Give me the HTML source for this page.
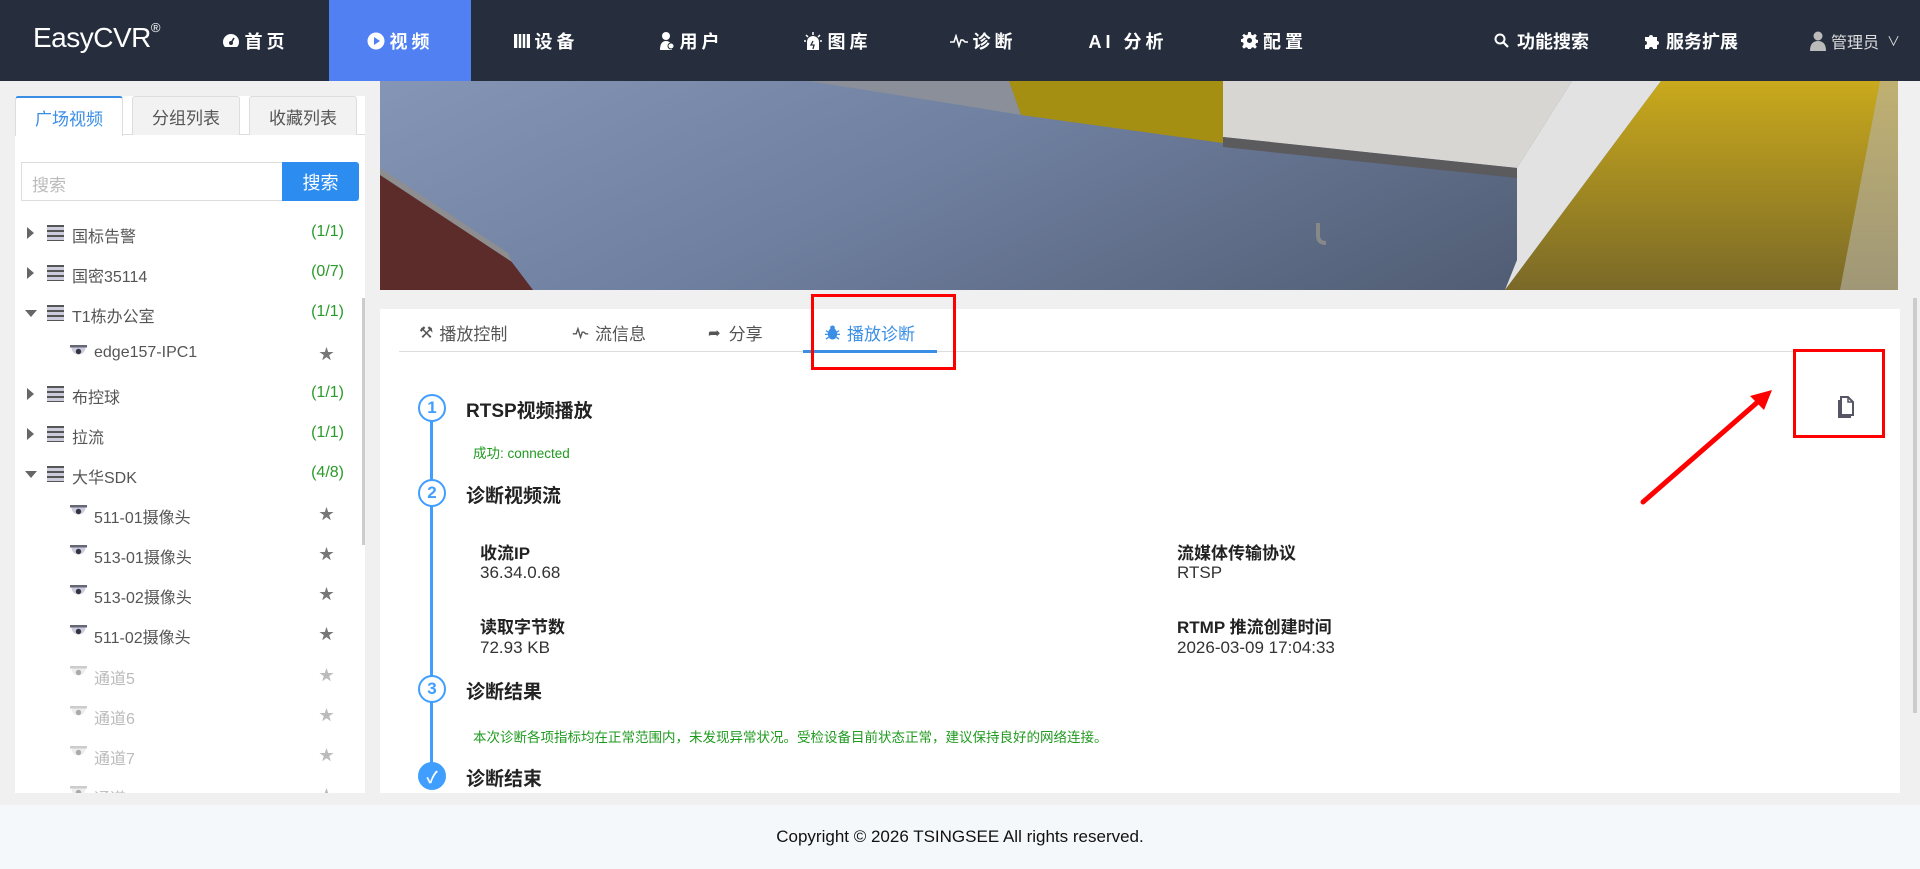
<!DOCTYPE html>
<html><head><meta charset="utf-8">
<style>
*{margin:0;padding:0;box-sizing:border-box}
body{width:1920px;height:869px;position:relative;overflow:hidden;background:#f0f0f0;font-family:"Liberation Sans","Noto Sans CJK SC",sans-serif;color:#333}
.abs{position:absolute}
#hdr{left:0;top:0;width:1920px;height:81px;background:#262e3e}
.logo{left:33px;top:22px;color:#fff;font-size:28px;letter-spacing:-0.5px}
.logo sup{font-size:13px;vertical-align:top;position:relative;top:-2px}
.nav{top:0;height:81px;width:142px;color:#fff;font-weight:bold;font-size:18px;letter-spacing:4px;display:flex;align-items:center;justify-content:center}
.nav.on{background:#5080f2}
.nav svg{margin-right:5px}
.rnav{top:0;height:81px;color:#fff;font-weight:bold;font-size:18px;display:flex;align-items:center}
.side{left:15px;top:96px;width:350px;height:697px;background:#fff}
.tab{top:96px;height:39px;width:108px;border:1px solid #ddd;border-bottom:none;background:#f2f2f2;color:#555;font-size:17px;display:flex;align-items:center;justify-content:center;border-radius:3px 3px 0 0}
.tab.on{background:#fff;color:#3a8ee6;border-color:#3a8ee6 #ddd #fff #ddd;border-top:2px solid #3a8ee6;height:40px}
.row{left:15px;width:345px;height:40px;font-size:16px;color:#555}
.row .arr{position:absolute;left:12px;top:14px;width:0;height:0}
.arr.r{border-left:7px solid #666;border-top:6px solid transparent;border-bottom:6px solid transparent}
.arr.d{border-top:7px solid #666;border-left:6px solid transparent;border-right:6px solid transparent;top:17px!important;left:10px!important}
.srv{position:absolute;left:32px;top:12px;width:17px;height:16px;background:repeating-linear-gradient(#555 0 2px,#ccd 2px 5px)}
.cam{position:absolute;top:11px;width:17px;height:15px}
.row .t{position:absolute;top:10px}
.row .c{position:absolute;right:16px;top:10px;color:#2a9a2a}
.row .s{position:absolute;left:304px;top:9px;color:#777;font-size:15px}
.dim{color:#bbb!important}
.ptab{top:320px;font-size:17px;color:#555;display:flex;align-items:center}
.step{left:418px;width:28px;height:28px;border:2px solid #409eff;border-radius:50%;background:#fff;color:#409eff;font-size:17px;font-weight:bold;display:flex;align-items:center;justify-content:center}
.st{left:466px;font-size:19px;font-weight:bold;color:#222}
.lab{font-size:17px;font-weight:bold;color:#222}
.val{font-size:17px;color:#333}
.grn{color:#1f9a1f;font-size:13.5px}
</style></head><body>
<div id="hdr" class="abs"></div>
<div class="abs logo">EasyCVR<sup>®</sup></div>
<div class="abs nav" style="left:184px"><svg width="18" height="16" viewBox="0 0 18 16"><path d="M9 1A8 8 0 0 0 1 9c0 2 .7 3.8 2 5h12c1.3-1.2 2-3 2-5A8 8 0 0 0 9 1z" fill="#fff"/><circle cx="9" cy="10" r="2" fill="#262e3e"/><path d="M9 10L12 5" stroke="#262e3e" stroke-width="1.6"/></svg>首页</div>
<div class="abs nav on" style="left:329px"><svg width="18" height="18" viewBox="0 0 18 18"><circle cx="9" cy="9" r="8.5" fill="#fff"/><path d="M7 5l6 4-6 4z" fill="#5080f2"/></svg>视频</div>
<div class="abs nav" style="left:475px"><svg width="16" height="16" viewBox="0 0 16 16"><rect x="0" y="1" width="16" height="14" fill="#fff"/><path d="M4 1v14M8 1v14M12 1v14" stroke="#262e3e" stroke-width="1.5"/></svg>设备</div>
<div class="abs nav" style="left:620px"><svg width="16" height="20" viewBox="0 0 16 20"><circle cx="7" cy="5" r="4" fill="#fff"/><path d="M1 19c0-6 2-9 6-9s6 3 6 9z" fill="#fff"/><circle cx="12" cy="15" r="3" fill="#fff" stroke="#262e3e"/></svg>用户</div>
<div class="abs nav" style="left:766px"><svg width="20" height="20" viewBox="0 0 20 20"><path d="M4 19V11a6 6 0 0 1 12 0v8z" fill="#fff"/><path d="M10 1v3M3 4l2 2M17 4l-2 2M1 10h2M17 10h2" stroke="#fff" stroke-width="1.5"/><path d="M10 10l-2 4h3l-1 4" stroke="#262e3e" stroke-width="1.3" fill="none"/></svg>图库</div>
<div class="abs nav" style="left:912px"><svg width="18" height="14" viewBox="0 0 18 14"><path d="M0 8h4l2-6 3 10 2-6h2l2 2h3" stroke="#fff" stroke-width="1.6" fill="none"/></svg>诊断</div>
<div class="abs nav" style="left:1057px">AI 分析</div>
<div class="abs nav" style="left:1203px"><svg width="17" height="17" viewBox="0 0 20 20"><path d="M8.5 0h3l.5 3 2 1 2.5-1.8 2.1 2.1L16.8 7l1 2 3 .5v3l-3 .5-1 2 1.8 2.5-2.1 2.1-2.5-1.8-2 1-.5 3h-3l-.5-3-2-1-2.5 1.8-2.1-2.1L3.2 14l-1-2-3-.5v-3l3-.5 1-2L1.4 4.3l2.1-2.1L6 4l2-1z" fill="#fff"/><circle cx="10" cy="10" r="3" fill="#262e3e"/></svg>配置</div>
<div class="abs rnav" style="left:1494px"><svg width="15" height="15" viewBox="0 0 15 15" style="margin-right:8px"><circle cx="6" cy="6" r="4.5" stroke="#fff" stroke-width="2" fill="none"/><path d="M9.5 9.5L14 14" stroke="#fff" stroke-width="2.2"/></svg>功能搜索</div>
<div class="abs rnav" style="left:1643px"><svg width="18" height="18" viewBox="0 0 18 18" style="margin-right:5px"><path d="M2 5h4a2 2 0 1 1 4 0h4v4a2 2 0 1 1 0 4v4H10a2 2 0 1 0-4 0H2v-4a2 2 0 1 0 0-4z" fill="#fff"/></svg>服务扩展</div>
<div class="abs rnav" style="left:1810px;font-weight:normal;font-size:16px;color:#ddd"><svg width="16" height="20" viewBox="0 0 16 20" style="margin-right:5px"><circle cx="8" cy="5" r="4.5" fill="#bbb"/><path d="M0 20c0-7 3-10 8-10s8 3 8 10z" fill="#bbb"/></svg>管理员<span style="margin-left:8px;font-size:13px">∨</span></div>

<!-- sidebar -->
<div class="abs side"></div>
<div class="abs" style="left:15px;top:134px;width:350px;height:1px;background:#ddd"></div>
<div class="abs tab on" style="left:15px">广场视频</div>
<div class="abs tab" style="left:132px">分组列表</div>
<div class="abs tab" style="left:249px">收藏列表</div>
<div class="abs" style="left:21px;top:162px;width:262px;height:39px;border:1px solid #ddd;color:#bbb;font-size:17px;padding:8px 0 0 10px">搜索</div>
<div class="abs" style="left:282px;top:162px;width:77px;height:39px;background:#2d8cf0;color:#fff;font-size:18px;display:flex;align-items:center;justify-content:center;border-radius:0 3px 3px 0">搜索</div>
<div class="abs" style="left:362px;top:298px;width:3px;height:247px;background:#ccc"></div>

<div class="abs row" style="top:213px"><i class="arr r" style="left:12px"></i><i class="srv"></i><span class="t" style="left:57px">国标告警</span><span class="c">(1/1)</span></div>
<div class="abs row" style="top:253px"><i class="arr r"></i><i class="srv"></i><span class="t" style="left:57px">国密35114</span><span class="c">(0/7)</span></div>
<div class="abs row" style="top:293px"><i class="arr d"></i><i class="srv"></i><span class="t" style="left:57px">T1栋办公室</span><span class="c">(1/1)</span></div>
<div class="abs row" style="top:334px"><svg class="cam" style="left:55px" viewBox="0 0 17 15"><rect x="0" y="0" width="17" height="2.5" fill="#667"/><path d="M1.5 2.5h14a7 7 0 0 1-14 0z" fill="#ccd"/><circle cx="8.5" cy="6.5" r="2.7" fill="#334"/></svg><span class="t" style="left:79px">edge157-IPC1</span><span class="s">★</span></div>
<div class="abs row" style="top:374px"><i class="arr r"></i><i class="srv"></i><span class="t" style="left:57px">布控球</span><span class="c">(1/1)</span></div>
<div class="abs row" style="top:414px"><i class="arr r"></i><i class="srv"></i><span class="t" style="left:57px">拉流</span><span class="c">(1/1)</span></div>
<div class="abs row" style="top:454px"><i class="arr d"></i><i class="srv"></i><span class="t" style="left:57px">大华SDK</span><span class="c">(4/8)</span></div>
<div class="abs row" style="top:494px"><svg class="cam" style="left:55px" viewBox="0 0 17 15"><rect width="17" height="2.5" fill="#667"/><path d="M1.5 2.5h14a7 7 0 0 1-14 0z" fill="#ccd"/><circle cx="8.5" cy="6.5" r="2.7" fill="#334"/></svg><span class="t" style="left:79px">511-01摄像头</span><span class="s">★</span></div>
<div class="abs row" style="top:534px"><svg class="cam" style="left:55px" viewBox="0 0 17 15"><rect width="17" height="2.5" fill="#667"/><path d="M1.5 2.5h14a7 7 0 0 1-14 0z" fill="#ccd"/><circle cx="8.5" cy="6.5" r="2.7" fill="#334"/></svg><span class="t" style="left:79px">513-01摄像头</span><span class="s">★</span></div>
<div class="abs row" style="top:574px"><svg class="cam" style="left:55px" viewBox="0 0 17 15"><rect width="17" height="2.5" fill="#667"/><path d="M1.5 2.5h14a7 7 0 0 1-14 0z" fill="#ccd"/><circle cx="8.5" cy="6.5" r="2.7" fill="#334"/></svg><span class="t" style="left:79px">513-02摄像头</span><span class="s">★</span></div>
<div class="abs row" style="top:614px"><svg class="cam" style="left:55px" viewBox="0 0 17 15"><rect width="17" height="2.5" fill="#667"/><path d="M1.5 2.5h14a7 7 0 0 1-14 0z" fill="#ccd"/><circle cx="8.5" cy="6.5" r="2.7" fill="#334"/></svg><span class="t" style="left:79px">511-02摄像头</span><span class="s">★</span></div>
<div class="abs row" style="top:655px"><svg class="cam" style="left:55px" viewBox="0 0 17 15"><rect width="17" height="2.5" fill="#ccc"/><path d="M1.5 2.5h14a7 7 0 0 1-14 0z" fill="#eee"/><circle cx="8.5" cy="6.5" r="2.7" fill="#aaa"/></svg><span class="t dim" style="left:79px">通道5</span><span class="s dim">★</span></div>
<div class="abs row" style="top:695px"><svg class="cam" style="left:55px" viewBox="0 0 17 15"><rect width="17" height="2.5" fill="#ccc"/><path d="M1.5 2.5h14a7 7 0 0 1-14 0z" fill="#eee"/><circle cx="8.5" cy="6.5" r="2.7" fill="#aaa"/></svg><span class="t dim" style="left:79px">通道6</span><span class="s dim">★</span></div>
<div class="abs row" style="top:735px"><svg class="cam" style="left:55px" viewBox="0 0 17 15"><rect width="17" height="2.5" fill="#ccc"/><path d="M1.5 2.5h14a7 7 0 0 1-14 0z" fill="#eee"/><circle cx="8.5" cy="6.5" r="2.7" fill="#aaa"/></svg><span class="t dim" style="left:79px">通道7</span><span class="s dim">★</span></div>
<div class="abs" style="left:15px;top:775px;width:350px;height:18px;overflow:hidden"><div class="abs row" style="top:0;left:0"><svg class="cam" style="left:55px" viewBox="0 0 17 15"><rect width="17" height="2.5" fill="#ccc"/><path d="M1.5 2.5h14a7 7 0 0 1-14 0z" fill="#eee"/><circle cx="8.5" cy="6.5" r="2.7" fill="#aaa"/></svg><span class="t dim" style="left:79px">通道8</span><span class="s dim">★</span></div></div>

<!-- video -->
<svg class="abs" style="left:380px;top:81px" width="1518" height="209" viewBox="380 81 1518 209">
<defs>
<linearGradient id="fl" x1="0" y1="0" x2="1" y2="0.3"><stop offset="0" stop-color="#8595b5"/><stop offset="0.45" stop-color="#6f7f9f"/><stop offset="1" stop-color="#4e5a70"/></linearGradient>
<linearGradient id="yd" x1="0" y1="0" x2="0" y2="1"><stop offset="0" stop-color="#c9a91c"/><stop offset="1" stop-color="#7a6928"/></linearGradient>
</defs>
<rect x="380" y="81" width="1518" height="209" fill="url(#fl)"/>
<polygon points="808,81 960,81 1009,81 1021,115 960,105" fill="#8a8f99"/>
<polygon points="1009,81 1223,81 1223,143 1021,115" fill="#a58f12"/>
<polygon points="1223,81 1572,81 1517,168 1223,137" fill="#d8d6d2"/>
<polygon points="1223,137 1517,168 1517,178 1223,147" fill="#5b5a5c"/>
<polygon points="1572,81 1661,81 1505,290 1517,260 1517,168" fill="#e2e2e2"/>
<polygon points="1661,81 1898,81 1898,290 1505,290" fill="url(#yd)"/>
<polygon points="1880,81 1898,81 1898,290 1840,290" fill="#b9b6ac" opacity="0.6"/>
<polygon points="380,172 508,257 533,290 380,290" fill="#5b2c2a"/>
<polygon points="380,168 508,253 512,262 380,175" fill="#8e8e90"/>
<path d="M1326 243 q-8 0 -8 -8 v-12" stroke="#888" stroke-width="4" fill="none"/>
</svg>
<div class="abs" style="left:1913px;top:298px;width:4px;height:415px;background:#ccc"></div>

<!-- content panel -->
<div class="abs" style="left:380px;top:309px;width:1520px;height:484px;background:#fff"></div>
<div class="abs" style="left:399px;top:351px;width:1483px;height:1px;background:#ddd"></div>
<div class="abs" style="left:803px;top:350px;width:134px;height:3px;background:#3a8ee6"></div>
<div class="abs ptab" style="left:419px"><span style="margin-right:6px;font-size:16px">⚒</span>播放控制</div>
<div class="abs ptab" style="left:572px"><svg width="17" height="12" viewBox="0 0 18 14" style="margin-right:6px"><path d="M0 8h4l2-6 3 10 2-6h2l2 2h3" stroke="#555" stroke-width="1.6" fill="none"/></svg>流信息</div>
<div class="abs ptab" style="left:708px"><span style="margin-right:8px;font-size:15px">➦</span>分享</div>
<div class="abs ptab" style="left:825px;color:#3a8ee6"><svg width="15" height="15" viewBox="0 0 16 16" style="margin-right:7px"><ellipse cx="8" cy="9.5" rx="5" ry="6" fill="#3a8ee6"/><circle cx="8" cy="3" r="2.5" fill="#3a8ee6"/><path d="M1 6l3 2M15 6l-3 2M0 10h3M16 10h-3M1 15l3-2M15 15l-3-2" stroke="#3a8ee6" stroke-width="1.4"/></svg>播放诊断</div>
<div class="abs" style="left:811px;top:294px;width:145px;height:76px;border:3px solid #f00"></div>
<div class="abs" style="left:1793px;top:349px;width:92px;height:89px;border:3px solid #f00"></div>
<svg class="abs" style="left:1630px;top:380px" width="150" height="135" viewBox="1630 380 150 135"><path d="M1643 502 L1760 400" stroke="#f00" stroke-width="5" stroke-linecap="round"/><polygon points="1772,390 1750,396 1764,410" fill="#f00"/></svg>
<svg class="abs" style="left:1837px;top:395px" width="20" height="24" viewBox="0 0 20 24"><path d="M4 2h7l5 5v13H4z" fill="#fff" stroke="#556" stroke-width="2"/><path d="M11 2v5h5" fill="none" stroke="#556" stroke-width="1.5"/><path d="M2 5v17h12" fill="none" stroke="#556" stroke-width="2"/></svg>

<div class="abs" style="left:430px;top:420px;width:3px;height:345px;background:#409eff"></div>
<div class="abs step" style="top:394px">1</div>
<div class="abs step" style="top:479px">2</div>
<div class="abs step" style="top:675px">3</div>
<div class="abs step" style="top:762px;background:#409eff;color:#fff;font-size:16px">✓</div>
<div class="abs st" style="top:396px">RTSP视频播放</div>
<div class="abs grn" style="left:473px;top:442px">成功: connected</div>
<div class="abs st" style="top:481px">诊断视频流</div>
<div class="abs lab" style="left:480px;top:539px">收流IP</div>
<div class="abs val" style="left:480px;top:563px">36.34.0.68</div>
<div class="abs lab" style="left:480px;top:613px">读取字节数</div>
<div class="abs val" style="left:480px;top:638px">72.93 KB</div>
<div class="abs lab" style="left:1177px;top:539px">流媒体传输协议</div>
<div class="abs val" style="left:1177px;top:563px">RTSP</div>
<div class="abs lab" style="left:1177px;top:613px">RTMP 推流创建时间</div>
<div class="abs val" style="left:1177px;top:638px">2026-03-09 17:04:33</div>
<div class="abs st" style="top:677px">诊断结果</div>
<div class="abs grn" style="left:473px;top:726px">本次诊断各项指标均在正常范围内，未发现异常状况。受检设备目前状态正常，建议保持良好的网络连接。</div>
<div class="abs st" style="top:764px;height:29px;overflow:hidden">诊断结束</div>

<!-- footer -->
<div class="abs" style="left:0;top:805px;width:1920px;height:64px;background:#f5f8fb"></div>
<div class="abs" style="left:0;top:827px;width:1920px;text-align:center;font-size:17px;color:#111">Copyright © 2026 TSINGSEE All rights reserved.</div>
</body></html>
